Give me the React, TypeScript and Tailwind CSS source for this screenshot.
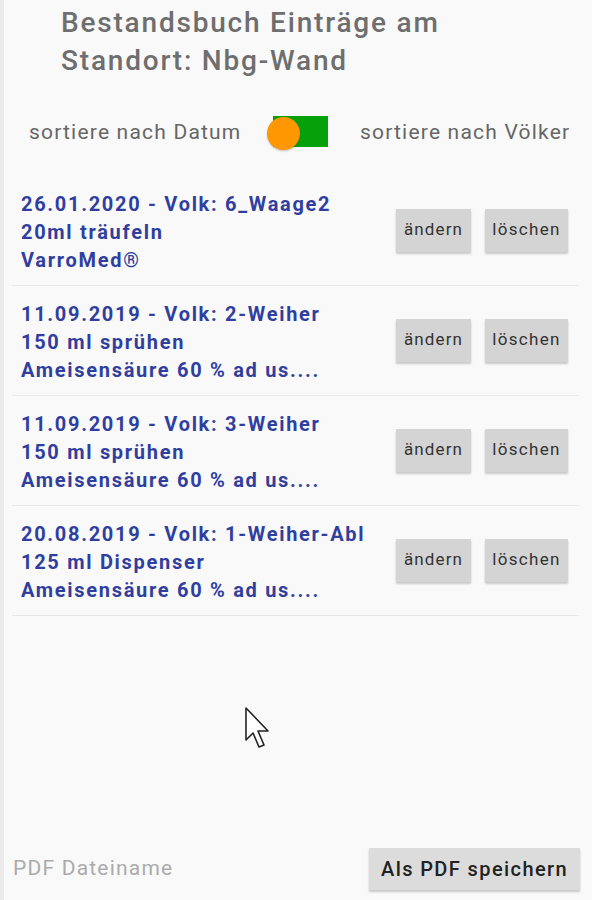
import React from 'react';

const entries = [
  { head: '26.01.2020 - Volk: 6_Waage2', dose: '20ml träufeln', med: 'VarroMed®' },
  { head: '11.09.2019 - Volk: 2-Weiher', dose: '150 ml sprühen', med: 'Ameisensäure 60 % ad us....' },
  { head: '11.09.2019 - Volk: 3-Weiher', dose: '150 ml sprühen', med: 'Ameisensäure 60 % ad us....' },
  { head: '20.08.2019 - Volk: 1-Weiher-Abl', dose: '125 ml Dispenser', med: 'Ameisensäure 60 % ad us....' },
];

const font = { fontFamily: 'Roboto, "Noto Sans", sans-serif' };

const App = () => {
  return (
    <div className="relative h-[900px] w-[592px] bg-[#f9f9f9] border-l-4 border-[#ebebeb] flex flex-col overflow-hidden" style={font}>
      {/* title */}
      <h1 className="pl-[57px] pt-1 text-[28px] leading-[38px] font-medium tracking-[1.8px] text-[#6e6e6e]">
        Bestandsbuch Einträge am
        <br />
        Standort: Nbg-Wand
      </h1>

      {/* sort switch */}
      <div className="mt-9 h-[34px] flex items-center text-[21px] tracking-[1.2px] text-[#666666]">
        <span className="ml-[25px] w-[238px] whitespace-nowrap">sortiere nach Datum</span>
        <div className="relative w-[60px] h-[34px]">
          <div className="absolute left-[6px] top-0 w-[55px] h-[31px] bg-[#06a10a]" />
          <div className="absolute left-0 top-[1px] w-[33px] h-[33px] rounded-full bg-[#ff9800] shadow-[0_1px_2px_rgba(0,0,0,0.25)]" />
        </div>
        <span className="ml-[33px] whitespace-nowrap">sortiere nach Völker</span>
      </div>

      {/* entries */}
      <div className="mt-[26px] ml-2 mr-[13px]">
        {entries.map((e, i) => (
          <div key={i} className="flex items-center border-b border-[#e9e9e9] pt-[14px] pb-[11px] pl-[9px] pr-[11px]">
            <div className="flex-1 text-[20px] leading-[28px] font-bold tracking-[1.7px] text-[#303f9f] whitespace-nowrap">
              <div>{e.head}</div>
              <div>{e.dose}</div>
              <div>{e.med}</div>
            </div>
            <button className="w-[75px] h-[43px] bg-[#d4d4d4] text-[17px] tracking-[1.1px] text-[#333333] shadow-[0_2px_2px_rgba(0,0,0,0.2)] mt-[-4px]">
              ändern
            </button>
            <button className="ml-[14px] w-[83px] h-[43px] bg-[#d4d4d4] text-[17px] tracking-[1.3px] text-[#333333] shadow-[0_2px_2px_rgba(0,0,0,0.2)] mt-[-4px]">
              löschen
            </button>
          </div>
        ))}
      </div>

      <div className="flex-1" />

      {/* footer */}
      <div className="flex items-center justify-between pl-[9px] pr-[12px] pb-[10px]">
        <span className="text-[21px] tracking-[1.2px] text-[#ababab]">PDF Dateiname</span>
        <button className="w-[211px] h-[42px] bg-[#dcdcdc] text-[20px] font-medium tracking-[1.4px] text-[#222222] shadow-[0_2px_2px_rgba(0,0,0,0.2)]">
          Als PDF speichern
        </button>
      </div>

      {/* mouse cursor */}
      <svg className="absolute left-[241px] top-[707px]" width="26" height="42" viewBox="0 0 26 42">
        <path
          d="M1 1 L1 33 L8 26 L14 40 L19 38 L13 24 L23 24 Z"
          fill="#ffffff"
          stroke="#222222"
          strokeWidth="1.6"
          strokeLinejoin="round"
        />
      </svg>
    </div>
  );
};

export default App;
